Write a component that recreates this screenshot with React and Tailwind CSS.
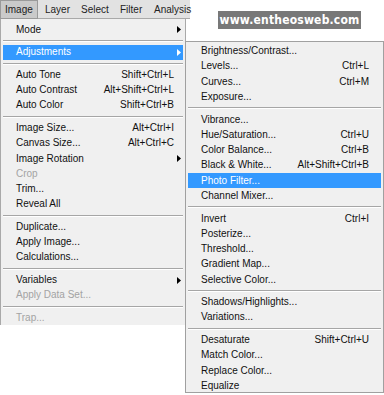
import React from "react";

const leftItems = [
    { label: "Mode", sub: true },
    "sep",
    { label: "Adjustments", sub: true, active: true },
    "sep",
    { label: "Auto Tone", key: "Shift+Ctrl+L" },
    { label: "Auto Contrast", key: "Alt+Shift+Ctrl+L" },
    { label: "Auto Color", key: "Shift+Ctrl+B" },
    "sep",
    { label: "Image Size...", key: "Alt+Ctrl+I" },
    { label: "Canvas Size...", key: "Alt+Ctrl+C" },
    { label: "Image Rotation", sub: true },
    { label: "Crop", disabled: true },
    { label: "Trim..." },
    { label: "Reveal All" },
    "sep",
    { label: "Duplicate..." },
    { label: "Apply Image..." },
    { label: "Calculations..." },
    "sep",
    { label: "Variables", sub: true },
    { label: "Apply Data Set...", disabled: true },
    "sep",
    { label: "Trap...", disabled: true },
];

const subItems = [
    { label: "Brightness/Contrast..." },
    { label: "Levels...", key: "Ctrl+L" },
    { label: "Curves...", key: "Ctrl+M" },
    { label: "Exposure..." },
    "sep",
    { label: "Vibrance..." },
    { label: "Hue/Saturation...", key: "Ctrl+U" },
    { label: "Color Balance...", key: "Ctrl+B" },
    { label: "Black & White...", key: "Alt+Shift+Ctrl+B" },
    { label: "Photo Filter...", active: true },
    { label: "Channel Mixer..." },
    "sep",
    { label: "Invert", key: "Ctrl+I" },
    { label: "Posterize..." },
    { label: "Threshold..." },
    { label: "Gradient Map..." },
    { label: "Selective Color..." },
    "sep",
    { label: "Shadows/Highlights..." },
    { label: "Variations..." },
    "sep",
    { label: "Desaturate", key: "Shift+Ctrl+U" },
    { label: "Match Color..." },
    { label: "Replace Color..." },
    { label: "Equalize" },
];

function Arrow({ white }) {
    return (
        <svg width="4" height="7" viewBox="0 0 4 7" className="shrink-0">
            <path d="M0 0 L4 3.5 L0 7 Z" fill={white ? "#ffffff" : "#000000"} />
        </svg>
    );
}

function MenuList({ items, textPad, keyPad, arrowPad }) {
    return items.map((item, i) => {
        if (item === "sep") {
            return (
                <div key={i} className="h-[7.4px] flex items-center px-[2px]">
                    <div className="w-full border-t border-t-[#a6a6a6] border-b border-b-white" />
                </div>
            );
        }
        let color = "text-[#111]";
        if (item.disabled) color = "text-[#a3a3a3]";
        if (item.active) color = "text-white";
        return (
            <div
                key={i}
                className={
                    "h-[15.25px] flex items-center mx-[2px] " +
                    (item.active ? "bg-[#3399ff] " : "") +
                    color
                }
                style={{ paddingLeft: textPad }}
            >
                <span className="flex-1 leading-none">{item.label}</span>
                {item.key && (
                    <span className="leading-none" style={{ paddingRight: keyPad }}>
                        {item.key}
                    </span>
                )}
                {item.sub && (
                    <span style={{ paddingRight: arrowPad }}>
                        <Arrow white={item.active} />
                    </span>
                )}
            </div>
        );
    });
}

export default function App() {
    return (
        <div
            className="relative w-[384px] h-[395px] bg-white overflow-hidden text-[10px]"
            style={{ fontFamily: '"Liberation Sans", Arial, sans-serif' }}
        >
            <div className="flex items-start h-[19px]">
                <div className="w-[190px] h-[19px] flex items-center bg-[#e2e2e2] border-b border-[#a9a9a9] text-[10px] text-[#222]">
                    <div className="h-[19px] w-[38px] shrink-0 pl-[4px] flex items-center bg-[#cacaca] border border-[#9a9a9a]">
                        Image
                    </div>
                    <div className="ml-[7px] w-[36px] shrink-0">Layer</div>
                    <div className="w-[39px] shrink-0">Select</div>
                    <div className="w-[34px] shrink-0">Filter</div>
                    <div className="whitespace-nowrap">Analysis</div>
                </div>
                <div className="ml-[28px] mt-[11px] w-[143px] h-[18px] shrink-0 bg-[#787878] flex items-center justify-center">
                    <span
                        className="text-white text-[12px] font-bold tracking-[0.2px]"
                        style={{ fontFamily: '"DejaVu Sans Condensed", "DejaVu Sans", sans-serif' }}
                    >
                        www.entheosweb.com
                    </span>
                </div>
            </div>

            <div className="w-[186px] h-[306px] bg-[#f0f0f0] border-l border-r border-[#a9a9a9] pt-[3px]">
                <MenuList items={leftItems} textPad={13} keyPad={9} arrowPad={2} />
            </div>

            <div className="absolute left-[185px] top-[41px] w-[199px] h-[352px] bg-[#f0f0f0] border border-[#a0a0a0] pt-[1.6px]">
                <MenuList items={subItems} textPad={13} keyPad={12} arrowPad={2} />
            </div>
        </div>
    );
}
